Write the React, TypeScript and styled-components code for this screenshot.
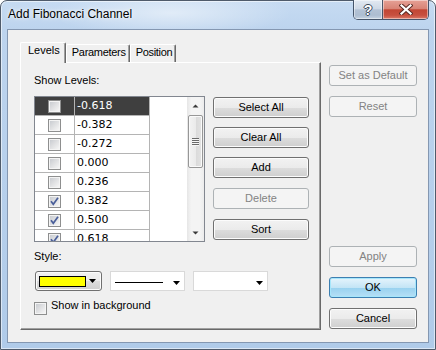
import React from 'react';
import styled, { createGlobalStyle } from 'styled-components';

const GlobalStyle = createGlobalStyle`
  html, body { margin: 0; padding: 0; background: #ffffff; }
  body { font-family: "Liberation Sans", Arial, sans-serif; font-size: 11px; color: #000; }
  * { box-sizing: border-box; }
`;

const Window = styled.div`
  width: 436px;
  height: 350px;
  border: 1px solid #4f5b6b;
  border-radius: 7px 7px 0 0;
  padding: 0 6px 6px 6px;
  display: flex;
  flex-direction: column;
  background:
    radial-gradient(ellipse 150px 30px at 170px 12px, rgba(255, 255, 255, 0.5), rgba(255, 255, 255, 0) 80%),
    linear-gradient(to bottom, #c6dbf2 0px, #bdd4ee 28px, #b0cbe9 100%);
  box-shadow: inset 0 0 0 1px rgba(255, 255, 255, 0.55);
`;

const TitleBar = styled.div`
  height: 28px;
  display: flex;
  align-items: flex-start;
`;

const TitleText = styled.div`
  padding: 6px 0 0 1px;
  font-family: "Segoe UI", "Liberation Sans", Arial, sans-serif;
  font-size: 12px;
  line-height: 15px;
  color: #000;
  text-shadow: 0 0 6px rgba(255, 255, 255, 0.9), 0 0 3px rgba(255, 255, 255, 0.9);
`;

const CaptionButtons = styled.div`
  margin-left: auto;
  margin-top: -1px;
  display: flex;
  height: 20px;
  border: 1px solid #45546a;
  border-top: none;
  border-radius: 0 0 5px 5px;
  overflow: hidden;
`;

const CaptionButton = styled.div<{ $kind: 'help' | 'close' }>`
  width: ${p => (p.$kind === 'close' ? 46 : 28)}px;
  display: flex;
  align-items: center;
  justify-content: center;
  border-left: ${p => (p.$kind === 'close' ? '1px solid #4a566a' : 'none')};
  box-shadow: inset 0 0 0 1px rgba(255, 255, 255, 0.45);
  background: ${p =>
    p.$kind === 'close'
      ? 'linear-gradient(to bottom, #e6a196 0%, #d88476 45%, #c24634 52%, #c7503f 80%, #dc7a68 100%)'
      : 'linear-gradient(to bottom, #e2e9f2 0%, #cfd9e6 45%, #b3c2d5 52%, #adbdd1 80%, #c6d3e2 100%)'};
`;

const HelpGlyph = styled.span`
  font-family: "Liberation Sans", Arial, sans-serif;
  font-weight: bold;
  font-size: 14px;
  line-height: 14px;
  color: #ffffff;
  margin-top: 1px;
  text-shadow: 1px 0 0 #3d4a5c, -1px 0 0 #3d4a5c, 0 1px 0 #3d4a5c, 0 -1px 0 #3d4a5c;
`;

const Client = styled.div`
  flex: 1;
  display: flex;
  background: #f0f0f0;
  border: 1px solid #8497b1;
  padding: 0 11px 0 12px;
`;

const LeftCol = styled.div`
  width: 301px;
  padding: 12px 0 12px 0;
  display: flex;
  flex-direction: column;
`;

const RightCol = styled.div`
  width: 88px;
  margin-left: 8px;
  padding: 35px 0 13px 0;
  display: flex;
  flex-direction: column;
`;

const Spacer = styled.div`
  flex: 1;
`;

const TabStrip = styled.div`
  height: 20px;
  display: flex;
  align-items: flex-end;
  position: relative;
  z-index: 1;
`;

const Tab = styled.div<{ $active?: boolean }>`
  height: ${p => (p.$active ? 21 : 18)}px;
  margin-bottom: ${p => (p.$active ? -1 : 0)}px;
  padding: ${p => (p.$active ? '1px 5px 0 7px' : '1px 3px 0 5px')};
  border-top: 1px solid #ffffff;
  border-left: 1px solid #ffffff;
  border-right: 1px solid #696969;
  border-radius: 2px 2px 0 0;
  box-shadow: inset -1px 0 0 #a0a0a0;
  background: #f0f0f0;
  line-height: 13px;
  white-space: nowrap;
  letter-spacing: ${p => (p.$active ? 0 : -0.3)}px;
`;

const Panel = styled.div`
  flex: 1;
  border-top: 1px solid #ffffff;
  border-left: 1px solid #ffffff;
  border-right: 1px solid #696969;
  border-bottom: 1px solid #696969;
  box-shadow: inset -1px -1px 0 #a0a0a0;
  background: #f0f0f0;
  padding: 11px 0 0 13px;
  display: flex;
  flex-direction: column;
`;

const Label = styled.div<{ $mt?: number }>`
  line-height: 13px;
  margin-top: ${p => p.$mt ?? 0}px;
`;

const ListRow = styled.div`
  margin-top: 9px;
  display: flex;
`;

const ListBox = styled.div`
  width: 171px;
  height: 146px;
  border: 1px solid #828790;
  background: #ffffff;
  display: flex;
`;

const Rows = styled.div`
  flex: 1;
  overflow: hidden;
`;

const Row = styled.div`
  display: flex;
  width: 115px;
  height: 19px;
`;

const CheckCell = styled.div<{ $selected?: boolean }>`
  width: 40px;
  height: 19px;
  border-right: 1px solid #b4b4b4;
  border-bottom: 1px solid #b4b4b4;
  background: ${p => (p.$selected ? '#3f3f3f' : '#ffffff')};
  display: flex;
  justify-content: center;
  padding-top: 3px;
`;

const ValueCell = styled.div<{ $selected?: boolean }>`
  width: 75px;
  height: 19px;
  border-right: 1px solid #b4b4b4;
  border-bottom: 1px solid #b4b4b4;
  background: ${p => (p.$selected ? '#3f3f3f' : '#ffffff')};
  color: ${p => (p.$selected ? '#ffffff' : '#000000')};
  font-family: "DejaVu Sans", Verdana, sans-serif;
  font-size: 11px;
  line-height: 18px;
  padding-left: 2px;
`;

const Box = styled.span`
  width: 13px;
  height: 13px;
  flex: none;
  border: 1px solid #8e8f8f;
  background: #f4f4f4;
  padding: 1px;
  display: flex;
`;

const BoxInner = styled.span`
  flex: 1;
  display: flex;
  background: linear-gradient(135deg, #c9ccd1 0%, #dedfe1 45%, #f5f5f5 100%);
`;

const ScrollBar = styled.div`
  width: 17px;
  display: flex;
  flex-direction: column;
  background: linear-gradient(to right, #e6e6e6 0%, #f4f4f4 25%, #f4f4f4 75%, #ececec 100%);
`;

const ScrollArrow = styled.div`
  height: 17px;
  display: flex;
  align-items: center;
  justify-content: center;
`;

const Track = styled.div`
  flex: 1;
  padding: 1px 1px 0 1px;
`;

const Thumb = styled.div`
  height: 53px;
  border: 1px solid #979797;
  border-radius: 2px;
  background: linear-gradient(to right, #f3f3f3 0%, #ebebeb 50%, #dadada 51%, #e3e3e3 100%);
  box-shadow: inset 0 0 0 1px #fafafa;
  display: flex;
  align-items: center;
  justify-content: center;
`;

const Grip = styled.div`
  width: 7px;
  height: 8px;
  margin-left: -1px;
  background: repeating-linear-gradient(to bottom, #6a6a6a 0px, #6a6a6a 1px, #f7f7f7 1px, #f7f7f7 2px);
`;

const ListButtons = styled.div`
  margin-left: 8px;
  width: 96px;
  padding-top: 1px;
  display: flex;
  flex-direction: column;
`;

const Button = styled.div<{ $variant?: 'normal' | 'disabled' | 'default'; $mt?: number }>`
  height: 21px;
  margin-top: ${p => p.$mt ?? 0}px;
  border-radius: 3px;
  display: flex;
  align-items: center;
  justify-content: center;
  line-height: 13px;
  white-space: nowrap;
  border: 1px solid
    ${p => (p.$variant === 'disabled' ? '#adb2b5' : p.$variant === 'default' ? '#3c7fb1' : '#707070')};
  color: ${p => (p.$variant === 'disabled' ? '#838383' : '#000000')};
  background: ${p =>
    p.$variant === 'disabled'
      ? '#f4f4f4'
      : p.$variant === 'default'
      ? 'linear-gradient(to bottom, #e5f4fc 0%, #c4e5f6 50%, #98d1ef 51%, #b6e0f6 100%)'
      : 'linear-gradient(to bottom, #f2f2f2 0%, #ebebeb 50%, #dddddd 51%, #cfcfcf 100%)'};
  box-shadow: ${p =>
    p.$variant === 'disabled'
      ? 'none'
      : p.$variant === 'default'
      ? 'inset 0 0 0 1px #a6e6fb'
      : 'inset 0 0 0 1px #fcfcfc'};
`;

const ComboRow = styled.div`
  margin-top: 8px;
  display: flex;
  gap: 8px;
`;

const ColorCombo = styled.div`
  width: 67px;
  height: 20px;
  margin-left: 1px;
  border: 1px solid #707070;
  border-radius: 3px;
  background: linear-gradient(to bottom, #f2f2f2 0%, #ebebeb 50%, #dddddd 51%, #cfcfcf 100%);
  box-shadow: inset 0 0 0 1px #fcfcfc;
  display: flex;
  align-items: center;
  padding-left: 3px;
`;

const Swatch = styled.div<{ $color: string }>`
  width: 47px;
  height: 11px;
  border: 1px solid #000000;
  background: ${p => p.$color};
  margin-right: 3px;
`;

const Combo = styled.div`
  width: 75px;
  height: 20px;
  border: 1px solid #d9d9d9;
  background: #ffffff;
  display: flex;
  align-items: center;
  padding: 0 4px 0 4px;
`;

const LineSample = styled.div`
  width: 48px;
  height: 1px;
  background: #000000;
  margin-top: 2px;
`;

const ComboArrow = styled.div`
  margin-left: auto;
  margin-top: 4px;
  display: flex;
`;

const CheckRow = styled.label`
  margin-top: 8px;
  display: flex;
  align-items: flex-start;
  line-height: 13px;
`;

const CheckRowBox = styled(Box)`
  margin-top: 3px;
  margin-right: 4px;
`;

const Triangle = ({ up = false }: { up?: boolean }) => (
  <svg width="7" height="4" viewBox="0 0 7 4">
    {up ? <polygon points="3.5,0 7,4 0,4" fill="#000" /> : <polygon points="0,0 7,0 3.5,4" fill="#000" />}
  </svg>
);

const SmallArrow = ({ up = false }: { up?: boolean }) => (
  <svg width="7" height="4" viewBox="0 0 7 4">
    {up ? <polygon points="3.5,0.5 6.5,3.5 0.5,3.5" fill="#3a3a3a" /> : <polygon points="0.5,0.5 6.5,0.5 3.5,3.5" fill="#3a3a3a" />}
  </svg>
);

const CheckMark = () => (
  <svg width="9" height="9" viewBox="0 0 9 9">
    <path d="M1 4.2 L3.3 7.3 L8 0.8" fill="none" stroke="#4a5f9a" strokeWidth="1.7" />
  </svg>
);

const CloseGlyph = () => (
  <svg width="14" height="11" viewBox="0 0 14 11">
    <path d="M2.5 1.5 L11.5 9.5 M11.5 1.5 L2.5 9.5" stroke="#5a2b25" strokeWidth="4.2" strokeLinecap="square" />
    <path d="M2.5 1.5 L11.5 9.5 M11.5 1.5 L2.5 9.5" stroke="#ffffff" strokeWidth="2.2" strokeLinecap="square" />
  </svg>
);

const CheckBox = ({ checked }: { checked?: boolean }) => (
  <Box>
    <BoxInner>{checked && <CheckMark />}</BoxInner>
  </Box>
);

const levels = [
  { value: '-0.618', checked: false },
  { value: '-0.382', checked: false },
  { value: '-0.272', checked: false },
  { value: '0.000', checked: false },
  { value: '0.236', checked: false },
  { value: '0.382', checked: true },
  { value: '0.500', checked: true },
  { value: '0.618', checked: true },
];

export default function App() {
  const selected = 0;
  return (
    <>
      <GlobalStyle />
      <Window>
        <TitleBar>
          <TitleText>Add Fibonacci Channel</TitleText>
          <CaptionButtons>
            <CaptionButton $kind="help">
              <HelpGlyph>?</HelpGlyph>
            </CaptionButton>
            <CaptionButton $kind="close">
              <CloseGlyph />
            </CaptionButton>
          </CaptionButtons>
        </TitleBar>
        <Client>
          <LeftCol>
            <TabStrip>
              <Tab $active>Levels</Tab>
              <Tab>Parameters</Tab>
              <Tab>Position</Tab>
            </TabStrip>
            <Panel>
              <Label>Show Levels:</Label>
              <ListRow>
                <ListBox>
                  <Rows>
                    {levels.map((l, i) => (
                      <Row key={l.value}>
                        <CheckCell $selected={i === selected}>
                          <CheckBox checked={l.checked} />
                        </CheckCell>
                        <ValueCell $selected={i === selected}>{l.value}</ValueCell>
                      </Row>
                    ))}
                  </Rows>
                  <ScrollBar>
                    <ScrollArrow>
                      <SmallArrow up />
                    </ScrollArrow>
                    <Track>
                      <Thumb>
                        <Grip />
                      </Thumb>
                    </Track>
                    <ScrollArrow>
                      <SmallArrow />
                    </ScrollArrow>
                  </ScrollBar>
                </ListBox>
                <ListButtons>
                  <Button>Select All</Button>
                  <Button $mt={9}>Clear All</Button>
                  <Button $mt={9}>Add</Button>
                  <Button $mt={10} $variant="disabled">Delete</Button>
                  <Button $mt={10}>Sort</Button>
                </ListButtons>
              </ListRow>
              <Label $mt={8}>Style:</Label>
              <ComboRow>
                <ColorCombo>
                  <Swatch $color="#ffff00" />
                  <Triangle />
                </ColorCombo>
                <Combo>
                  <LineSample />
                  <ComboArrow>
                    <Triangle />
                  </ComboArrow>
                </Combo>
                <Combo>
                  <ComboArrow>
                    <Triangle />
                  </ComboArrow>
                </Combo>
              </ComboRow>
              <CheckRow>
                <CheckRowBox>
                  <BoxInner />
                </CheckRowBox>
                <span>Show in background</span>
              </CheckRow>
            </Panel>
          </LeftCol>
          <RightCol>
            <Button $variant="disabled">Set as Default</Button>
            <Button $variant="disabled" $mt={10}>Reset</Button>
            <Spacer />
            <Button $variant="disabled">Apply</Button>
            <Button $variant="default" $mt={10}>OK</Button>
            <Button $mt={10}>Cancel</Button>
          </RightCol>
        </Client>
      </Window>
    </>
  );
}
